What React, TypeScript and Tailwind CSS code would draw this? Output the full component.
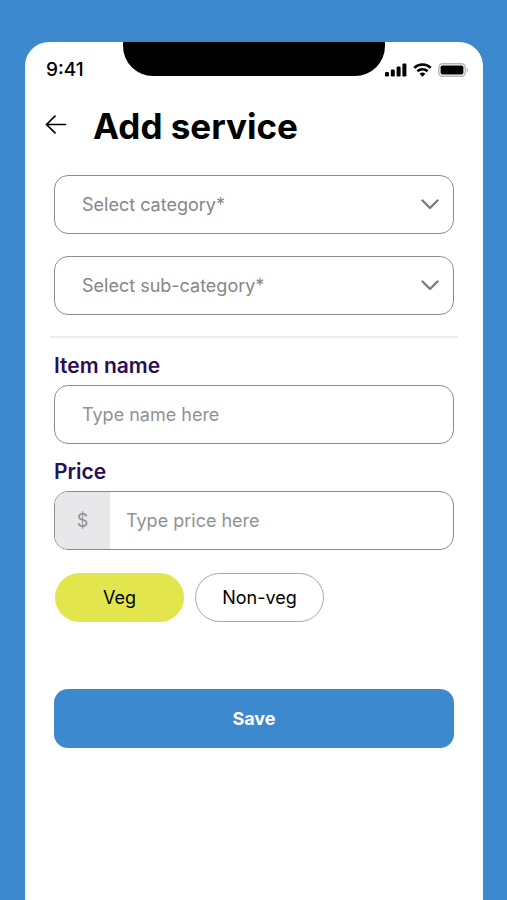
import { useState } from 'react'
import clsx from 'clsx'

const categories = ['Food', 'Drinks', 'Desserts']
const subCategories = ['Starters', 'Mains', 'Sides']

function StatusIcons() {
  return (
    <div className="flex items-center gap-[6px]" aria-hidden="true">
      <svg width="22" height="14" viewBox="0 0 22 14" fill="#000">
        <rect x="0" y="9" width="4" height="4.5" rx="1.2" />
        <rect x="5.8" y="6.5" width="4" height="7" rx="1.2" />
        <rect x="11.6" y="3.5" width="4" height="10" rx="1.2" />
        <rect x="17.4" y="0.5" width="4" height="13" rx="1.2" />
      </svg>
      <svg width="19" height="14" viewBox="0 0 19 14" fill="none" stroke="#000" strokeWidth="2.6">
        <path d="M1.2 4.9a12 12 0 0 1 16.6 0" />
        <path d="M4.4 8.3a7.4 7.4 0 0 1 10.2 0" />
        <path d="M6.6 10.7a4.3 4.3 0 0 1 5.8 0L9.5 13.7z" fill="#000" stroke="none" />
      </svg>
      <svg width="31" height="14" viewBox="0 0 31 14" fill="none">
        <rect x="0.8" y="0.8" width="26.4" height="12.4" rx="3.6" stroke="#b5b5b5" strokeWidth="1.4" />
        <rect x="2.6" y="2.4" width="22.8" height="9.2" rx="1.8" fill="#000" />
        <path d="M28.6 4.8c1.8.7 1.8 3.7 0 4.4z" fill="#b5b5b5" />
      </svg>
    </div>
  )
}

function SelectField({ label, options }: { label: string; options: string[] }) {
  const [value, setValue] = useState('')

  return (
    <div className="grid items-center">
      <select
        aria-label={label}
        value={value}
        onChange={(e) => setValue(e.target.value)}
        className="col-start-1 row-start-1 h-[59px] w-full appearance-none rounded-[14px] border border-[#8c8c8c] bg-white pr-12 pl-[27px] text-[18px] text-[#868686]"
      >
        <option value="">{label}</option>
        {options.map((option) => (
          <option key={option} value={option}>
            {option}
          </option>
        ))}
      </select>
      <svg
        width="18"
        height="11"
        viewBox="0 0 18 11"
        fill="none"
        stroke="#7d7d7d"
        strokeWidth="2.4"
        strokeLinecap="round"
        strokeLinejoin="round"
        className="pointer-events-none col-start-1 row-start-1 mr-[15px] justify-self-end"
      >
        <path d="M1.5 1.5 9 9l7.5-7.5" />
      </svg>
    </div>
  )
}

export default function App() {
  const [name, setName] = useState('')
  const [price, setPrice] = useState('')
  const [type, setType] = useState('veg')

  return (
    <div className="flex min-h-screen flex-col bg-[#3c89cd] pt-[42px] pr-6 pl-[25px] font-['Inter','Liberation_Sans',sans-serif]">
      <div className="flex grow flex-col rounded-t-[24px] bg-white">
        <div className="grid grid-cols-[1fr_57%_1fr] items-start">
          <div className="pt-4 pl-[21px] text-[19px] leading-6 font-medium text-black">9:41</div>
          <div className="h-[34px] rounded-b-[30px] bg-black" />
          <div className="pt-[21px]">
            <StatusIcons />
          </div>
        </div>

        <header className="mt-[26px] flex items-center pl-5">
          <button type="button" aria-label="Go back" className="cursor-pointer">
            <svg
              width="22"
              height="22"
              viewBox="0 0 22 22"
              fill="none"
              stroke="#000"
              strokeWidth="1.7"
              strokeLinecap="round"
              strokeLinejoin="round"
            >
              <path d="M20.5 9.5H1.5M10 1.2 1.5 9.5l8.5 8.3" />
            </svg>
          </button>
          <h1 className="ml-[26px] text-[35px] leading-9 font-bold text-black">Add service</h1>
        </header>

        <form className="mt-[31px] flex flex-col px-[29px]" onSubmit={(e) => e.preventDefault()}>
          <div className="flex flex-col gap-[22px]">
            <SelectField label="Select category*" options={categories} />
            <SelectField label="Select sub-category*" options={subCategories} />
          </div>

          <hr className="-mx-1 mt-[21px] border-t-2 border-[#ededed]" />

          <label htmlFor="item-name" className="mt-4 text-[21px] leading-6 font-semibold text-[#2b0d57]">
            Item name
          </label>
          <input
            id="item-name"
            type="text"
            placeholder="Type name here"
            value={name}
            onChange={(e) => setName(e.target.value)}
            className="mt-[7px] h-[59px] w-full rounded-[14px] border border-[#8c8c8c] px-[27px] text-[18px] text-black placeholder:text-[#929292]"
          />

          <label htmlFor="price" className="mt-4 text-[21px] leading-6 font-semibold text-[#2b0d57]">
            Price
          </label>
          <div className="mt-[7px] flex h-[59px] overflow-hidden rounded-[14px] border border-[#8c8c8c]">
            <span className="flex w-[55px] items-center justify-center bg-[#e8e8ea] text-[18px] text-[#929292]">
              $
            </span>
            <input
              id="price"
              type="text"
              inputMode="decimal"
              placeholder="Type price here"
              value={price}
              onChange={(e) => setPrice(e.target.value)}
              className="min-w-0 flex-1 px-4 text-[18px] text-black outline-none placeholder:text-[#929292]"
            />
          </div>

          <div className="mt-[23px] flex gap-[11px] pl-px">
            <button
              type="button"
              aria-pressed={type === 'veg'}
              onClick={() => setType('veg')}
              className={clsx(
                'h-[49px] w-[129px] cursor-pointer rounded-full border text-[18px] text-black',
                type === 'veg' ? 'border-[#e2e54b] bg-[#e2e54b]' : 'border-[#a6a6a6] bg-white'
              )}
            >
              Veg
            </button>
            <button
              type="button"
              aria-pressed={type === 'non-veg'}
              onClick={() => setType('non-veg')}
              className={clsx(
                'h-[49px] w-[129px] cursor-pointer rounded-full border text-[18px] text-black',
                type === 'non-veg' ? 'border-[#e2e54b] bg-[#e2e54b]' : 'border-[#a6a6a6] bg-white'
              )}
            >
              Non-veg
            </button>
          </div>

          <button
            type="submit"
            className="mt-[67px] h-[59px] w-full cursor-pointer rounded-[14px] bg-[#3c89cd] text-[18px] font-bold text-white"
          >
            Save
          </button>
        </form>
      </div>
    </div>
  )
}
